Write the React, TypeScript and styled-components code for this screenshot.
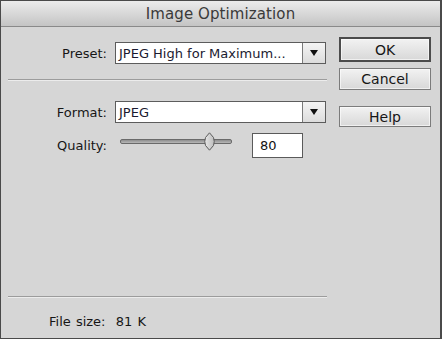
import { FC } from "react";
import styled, { createGlobalStyle } from "styled-components";

const GlobalStyle = createGlobalStyle`
  html, body {
    margin: 0;
    padding: 0;
    background: #d6d6d6;
  }
  * {
    box-sizing: border-box;
  }
`;

const Dialog = styled.div`
  width: 442px;
  height: 339px;
  display: flex;
  flex-direction: column;
  background: #d6d6d6;
  border: 1px solid #4a4a4a;
  border-right-width: 2px;
  font-family: "DejaVu Sans", "Liberation Sans", sans-serif;
  font-size: 12.5px;
  color: #161616;
`;

const TitleBar = styled.div`
  height: 26px;
  flex-shrink: 0;
  display: flex;
  align-items: center;
  justify-content: center;
  background: linear-gradient(#ececec, #c4c4c4);
  border-bottom: 1px solid #8a8a8a;
  font-size: 15px;
  color: #3a3a3a;
  letter-spacing: 0.1px;
`;

const Body = styled.div`
  flex: 1;
  display: flex;
  padding: 9px 0 0 7px;
`;

const FormColumn = styled.div`
  width: 319px;
  display: flex;
  flex-direction: column;
`;

const Row = styled.div<{ top: number }>`
  display: flex;
  align-items: center;
  margin-top: ${(p) => p.top}px;
`;

const Label = styled.span`
  width: 107px;
  text-align: right;
  padding-right: 8px;
  font-size: 13px;
  color: #161616;
`;

const Select = styled.div`
  width: 211px;
  height: 22px;
  display: flex;
  background: #fff;
  border: 1px solid #5c5c5c;
`;

const SelectValue = styled.span`
  flex: 1;
  display: flex;
  align-items: center;
  padding-left: 3px;
  font-size: 13px;
  color: #1a1a30;
  white-space: nowrap;
  overflow: hidden;
`;

const SelectArrow = styled.span`
  width: 23px;
  display: flex;
  align-items: center;
  justify-content: center;
  background: linear-gradient(#f4f4f4, #dcdcdc);
  border-left: 1px solid #7a7a7a;

  &::after {
    content: "";
    border-left: 4px solid transparent;
    border-right: 4px solid transparent;
    border-top: 6px solid #111;
  }
`;

const Separator = styled.div<{ top: number }>`
  height: 0;
  margin-top: ${(p) => p.top}px;
  border-top: 1px solid #9c9c9c;
  border-bottom: 1px solid #ececec;
`;

const Slider = styled.div`
  position: relative;
  width: 112px;
  height: 5px;
  margin-left: 5px;
  margin-bottom: 8px;
  background: linear-gradient(#8e8e8e, #b8b8b8);
  border: 1px solid #6a6a6a;
  border-radius: 2px;
`;

const Thumb = styled.span`
  position: absolute;
  top: -8px;
  width: 13px;
  height: 19px;
  margin-left: -6px;
`;

const NumberBox = styled.div`
  width: 51px;
  height: 25px;
  margin-left: 20px;
  display: flex;
  align-items: center;
  padding-left: 7px;
  background: #fff;
  border: 1px solid #5a5a5a;
  font-size: 13px;
  color: #111;
`;

const Footer = styled.div`
  margin-top: auto;
  display: flex;
  flex-direction: column;
`;

const FileSize = styled.div`
  height: 40px;
  display: flex;
  align-items: center;
  padding: 6px 0 0 41px;
  font-size: 13px;
  color: #161616;
  word-spacing: 1px;
`;

const ButtonColumn = styled.div`
  display: flex;
  flex-direction: column;
  margin-left: 12px;
  padding-top: 1px;
`;

const Button = styled.div<{ primary?: boolean; top: number; h: number }>`
  width: 92px;
  height: ${(p) => p.h}px;
  margin-top: ${(p) => p.top}px;
  display: flex;
  align-items: center;
  justify-content: center;
  font-size: 14px;
  color: #161616;
  background: linear-gradient(#f2f2f2, #d8d8d8);
  border: ${(p) => (p.primary ? "2px solid #4c4c4c" : "1px solid #7c7c7c")};
  box-shadow: inset 0 0 0 1px rgba(255, 255, 255, 0.6);
`;

const ThumbIcon: FC = () => (
  <svg width="13" height="19" viewBox="0 0 13 19">
    <defs>
      <linearGradient id="tg" x1="0" y1="0" x2="1" y2="0">
        <stop offset="0" stopColor="#e6e6e6" />
        <stop offset="1" stopColor="#bdbdbd" />
      </linearGradient>
    </defs>
    <path
      d="M6.5 0.8 L10.5 5.5 Q12 9.5 10.5 13.5 L6.5 18.2 L2.5 13.5 Q1 9.5 2.5 5.5 Z"
      fill="url(#tg)"
      stroke="#5a5a5a"
      strokeWidth="1"
    />
  </svg>
);

export default function App() {
  const quality = 80;

  return (
    <>
      <GlobalStyle />
      <Dialog>
        <TitleBar>Image Optimization</TitleBar>
        <Body>
          <FormColumn>
            <Row top={6}>
              <Label>Preset:</Label>
              <Select>
                <SelectValue>JPEG High for Maximum...</SelectValue>
                <SelectArrow />
              </Select>
            </Row>
            <Separator top={15} />
            <Row top={20}>
              <Label>Format:</Label>
              <Select>
                <SelectValue>JPEG</SelectValue>
                <SelectArrow />
              </Select>
            </Row>
            <Row top={10}>
              <Label>Quality:</Label>
              <Slider>
                <Thumb style={{ left: `${quality}%` }}>
                  <ThumbIcon />
                </Thumb>
              </Slider>
              <NumberBox>{quality}</NumberBox>
            </Row>
            <Footer>
              <Separator top={0} />
              <FileSize>File size:&nbsp; 81 K</FileSize>
            </Footer>
          </FormColumn>
          <ButtonColumn>
            <Button primary top={0} h={25}>
              OK
            </Button>
            <Button top={6} h={22}>
              Cancel
            </Button>
            <Button top={16} h={21}>
              Help
            </Button>
          </ButtonColumn>
        </Body>
      </Dialog>
    </>
  );
}
